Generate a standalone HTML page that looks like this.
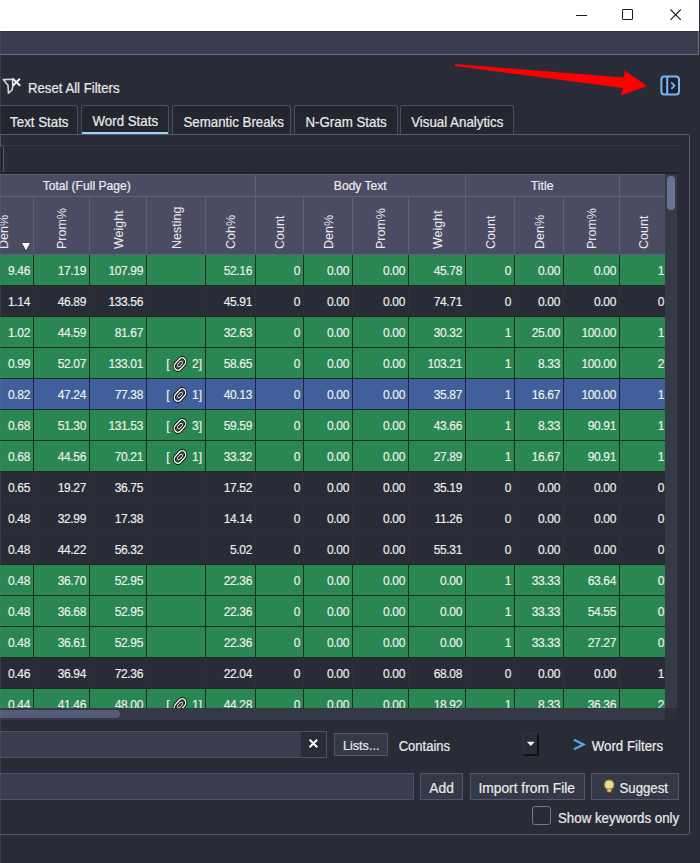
<!DOCTYPE html>
<html><head><meta charset="utf-8">
<style>
*{margin:0;padding:0;box-sizing:border-box}
html,body{width:700px;height:863px;overflow:hidden;background:#292c37;font-family:"Liberation Sans",sans-serif;color:#eaeaea}
.a{position:absolute}
.t{position:absolute;white-space:nowrap;line-height:1;transform:scaleY(1.08);-webkit-text-stroke:0.2px currentColor}
.tab{position:absolute;top:105px;height:29px;border:1px solid #4b4e5e;border-bottom:none;border-radius:3px 3px 0 0;background:#23262f}
.cell{position:absolute;height:30px;font-size:12px;line-height:32px;transform:scaleY(1.1);transform-origin:center 16px;text-align:right;color:#eef2ee;letter-spacing:-0.35px;-webkit-text-stroke:0.15px currentColor}
.hc{position:absolute;font-size:12.5px;color:#e8e8ee;line-height:1;white-space:nowrap;transform:rotate(-90deg);transform-origin:0 0}
.btn{position:absolute;background:#353847;border:1px solid #52566b}
</style></head><body>

<div class="a" style="left:0;top:0;width:699px;height:31px;background:#fff"></div>
<div class="a" style="left:699px;top:0;width:1px;height:31px;background:#2a2d38"></div>
<div class="a" style="left:576px;top:15px;width:11px;height:1px;background:#1a1a1a"></div>
<div class="a" style="left:622px;top:9px;width:11px;height:11px;border:1px solid #1a1a1a;border-radius:1px"></div>
<svg class="a" style="left:669px;top:8px" width="14" height="14" viewBox="0 0 14 14"><path d="M1.5 1.5L11.8 11.8M11.8 1.5L1.5 11.8" stroke="#1a1a1a" stroke-width="1.1"/></svg>
<div class="a" style="left:0;top:31px;width:699px;height:24px;background:#393d4f;border-right:1px solid #6d6f87;border-bottom:1px solid #6d6f87"></div>
<div class="a" style="left:0;top:31px;width:698px;height:1px;background:#30344a"></div>
<svg class="a" style="left:0;top:74px" width="24" height="22" viewBox="0 0 24 22"><path d="M3.2 5.6 L12.6 5.2 L12.8 12.2 L11.9 16.2 L8.4 19.2 L8 11.2 Z" fill="none" stroke="#d6d6d6" stroke-width="1.6" stroke-linejoin="round"/><path d="M12.5 4.6 L20.2 11.8 M20 4.6 L12.8 11.8" stroke="#f4f4f4" stroke-width="2"/></svg>
<div class="t" style="left:28.0px;top:82.0px;font-size:13.2px;">Reset All Filters</div>
<svg class="a" style="left:0;top:0" width="700" height="110"><polygon points="455,64 624,77.5 624.5,70.5 647,86 620.5,95.5 623,88 455,66" fill="#ff0000"/></svg>
<svg class="a" style="left:660px;top:75px" width="21" height="21" viewBox="0 0 21 21"><rect x="1.4" y="1.6" width="17.6" height="17.8" rx="3" fill="#1b2130" stroke="#78b8f0" stroke-width="2"/><rect x="6.2" y="2" width="2" height="17" fill="#78b8f0"/><path d="M11.2 7.3 L14.5 10.6 L11.4 13.9" fill="none" stroke="#78b8f0" stroke-width="1.7"/></svg>
<div class="tab" style="left:-3px;width:81px"></div>
<div class="t" style="left:10.1px;top:116.0px;font-size:13.3px;">Text Stats</div>
<div class="tab" style="left:81px;width:88px"></div>
<div class="t" style="left:92.5px;top:115.0px;font-size:13.3px;">Word Stats</div>
<div class="tab" style="left:172px;width:119px"></div>
<div class="t" style="left:183.4px;top:116.0px;font-size:13.3px;">Semantic Breaks</div>
<div class="tab" style="left:294px;width:104px"></div>
<div class="t" style="left:305.5px;top:116.0px;font-size:13.3px;">N-Gram Stats</div>
<div class="tab" style="left:400px;width:114px"></div>
<div class="t" style="left:411.2px;top:116.0px;font-size:13.3px;">Visual Analytics</div>
<div class="a" style="left:-3px;top:134px;width:693px;height:701px;border:1px solid #565a6c;border-radius:2px"></div>
<div class="a" style="left:0;top:145px;width:679px;height:1px;background:#363945"></div>
<div class="a" style="left:-3px;top:145px;width:7px;height:28px;border:1px solid #5a5d6e;border-radius:0 3px 3px 0;background:#1f222b"></div>
<div class="a" style="left:82px;top:132px;width:86px;height:2px;background:#a6d0f2"></div>
<div class="a" style="left:0;top:134px;width:1px;height:11px;background:#4a4d5e"></div>
<div class="a" style="left:0;top:172px;width:677px;height:2px;background:#1f2129"></div>
<div class="a" style="left:0;top:174px;width:665px;height:81px;background:#4b4c63"></div>
<div class="a" style="left:0;top:174px;width:665px;height:1px;background:#5d6076"></div>
<div class="a" style="left:0;top:196px;width:665px;height:1px;background:#5d6076"></div>
<div class="a" style="left:0;top:254px;width:665px;height:1px;background:#5d6076"></div>
<div class="a" style="left:255px;top:174px;width:1px;height:23px;background:#5d6076"></div>
<div class="a" style="left:465px;top:174px;width:1px;height:23px;background:#5d6076"></div>
<div class="a" style="left:619px;top:174px;width:1px;height:23px;background:#5d6076"></div>
<div class="a" style="left:33px;top:196px;width:1px;height:59px;background:#5d6076"></div>
<div class="a" style="left:89px;top:196px;width:1px;height:59px;background:#5d6076"></div>
<div class="a" style="left:146px;top:196px;width:1px;height:59px;background:#5d6076"></div>
<div class="a" style="left:205px;top:196px;width:1px;height:59px;background:#5d6076"></div>
<div class="a" style="left:255px;top:196px;width:1px;height:59px;background:#5d6076"></div>
<div class="a" style="left:303px;top:196px;width:1px;height:59px;background:#5d6076"></div>
<div class="a" style="left:352px;top:196px;width:1px;height:59px;background:#5d6076"></div>
<div class="a" style="left:408px;top:196px;width:1px;height:59px;background:#5d6076"></div>
<div class="a" style="left:465px;top:196px;width:1px;height:59px;background:#5d6076"></div>
<div class="a" style="left:514px;top:196px;width:1px;height:59px;background:#5d6076"></div>
<div class="a" style="left:563px;top:196px;width:1px;height:59px;background:#5d6076"></div>
<div class="a" style="left:619px;top:196px;width:1px;height:59px;background:#5d6076"></div>
<div class="t" style="left:86.7px;width:400px;margin-left:-200px;text-align:center;top:179.7px;font-size:12.1px;color:#ededf2;">Total (Full Page)</div>
<div class="t" style="left:360.3px;width:400px;margin-left:-200px;text-align:center;top:179.7px;font-size:12.1px;color:#ededf2;">Body Text</div>
<div class="t" style="left:542.2px;width:400px;margin-left:-200px;text-align:center;top:179.7px;font-size:12.3px;color:#ededf2;">Title</div>
<div class="hc" style="left:-2.5px;top:249px">Den%</div>
<div class="hc" style="left:56.0px;top:249px">Prom%</div>
<div class="hc" style="left:112.5px;top:249px">Weight</div>
<div class="hc" style="left:170.5px;top:249px">Nesting</div>
<div class="hc" style="left:225.0px;top:249px">Coh%</div>
<div class="hc" style="left:274.0px;top:249px">Count</div>
<div class="hc" style="left:322.5px;top:249px">Den%</div>
<div class="hc" style="left:375.0px;top:249px">Prom%</div>
<div class="hc" style="left:431.5px;top:249px">Weight</div>
<div class="hc" style="left:484.5px;top:249px">Count</div>
<div class="hc" style="left:533.5px;top:249px">Den%</div>
<div class="hc" style="left:586.0px;top:249px">Prom%</div>
<div class="hc" style="left:638.0px;top:249px">Count</div>
<svg class="a" style="left:20px;top:241px" width="12" height="11" viewBox="0 0 12 11"><path d="M1.2 1.5 L10.8 1.5 L6 10 Z" fill="#fff" stroke="#2a2c38" stroke-width="0.8"/></svg>
<div class="a" style="left:0;top:255px;width:665px;height:453px;overflow:hidden">
<div class="a" style="left:0;top:0px;width:665px;height:31px;background:#2a8751"></div>
<div class="a" style="left:0;top:30px;width:665px;height:1px;background:#1b2a22"></div>
<div class="a" style="left:33px;top:0px;width:1px;height:31px;background:#1b2a22"></div>
<div class="a" style="left:89px;top:0px;width:1px;height:31px;background:#1b2a22"></div>
<div class="a" style="left:146px;top:0px;width:1px;height:31px;background:#1b2a22"></div>
<div class="a" style="left:205px;top:0px;width:1px;height:31px;background:#1b2a22"></div>
<div class="a" style="left:255px;top:0px;width:1px;height:31px;background:#1b2a22"></div>
<div class="a" style="left:303px;top:0px;width:1px;height:31px;background:#1b2a22"></div>
<div class="a" style="left:352px;top:0px;width:1px;height:31px;background:#1b2a22"></div>
<div class="a" style="left:408px;top:0px;width:1px;height:31px;background:#1b2a22"></div>
<div class="a" style="left:465px;top:0px;width:1px;height:31px;background:#1b2a22"></div>
<div class="a" style="left:514px;top:0px;width:1px;height:31px;background:#1b2a22"></div>
<div class="a" style="left:563px;top:0px;width:1px;height:31px;background:#1b2a22"></div>
<div class="a" style="left:619px;top:0px;width:1px;height:31px;background:#1b2a22"></div>
<div class="cell" style="left:-20px;top:0px;width:50px">9.46</div>
<div class="cell" style="left:34px;top:0px;width:52px">17.19</div>
<div class="cell" style="left:90px;top:0px;width:53px">107.99</div>
<div class="cell" style="left:206px;top:0px;width:46px">52.16</div>
<div class="cell" style="left:256px;top:0px;width:44px">0</div>
<div class="cell" style="left:304px;top:0px;width:45px">0.00</div>
<div class="cell" style="left:353px;top:0px;width:52px">0.00</div>
<div class="cell" style="left:409px;top:0px;width:53px">45.78</div>
<div class="cell" style="left:466px;top:0px;width:45px">0</div>
<div class="cell" style="left:515px;top:0px;width:45px">0.00</div>
<div class="cell" style="left:564px;top:0px;width:52px">0.00</div>
<div class="cell" style="left:620px;top:0px;width:44px">1</div>
<div class="a" style="left:0;top:31px;width:665px;height:31px;background:#292c37"></div>
<div class="a" style="left:0;top:61px;width:665px;height:1px;background:#1b2a22"></div>
<div class="a" style="left:33px;top:31px;width:1px;height:31px;background:#2d303b"></div>
<div class="a" style="left:89px;top:31px;width:1px;height:31px;background:#2d303b"></div>
<div class="a" style="left:146px;top:31px;width:1px;height:31px;background:#2d303b"></div>
<div class="a" style="left:205px;top:31px;width:1px;height:31px;background:#2d303b"></div>
<div class="a" style="left:255px;top:31px;width:1px;height:31px;background:#2d303b"></div>
<div class="a" style="left:303px;top:31px;width:1px;height:31px;background:#2d303b"></div>
<div class="a" style="left:352px;top:31px;width:1px;height:31px;background:#2d303b"></div>
<div class="a" style="left:408px;top:31px;width:1px;height:31px;background:#2d303b"></div>
<div class="a" style="left:465px;top:31px;width:1px;height:31px;background:#2d303b"></div>
<div class="a" style="left:514px;top:31px;width:1px;height:31px;background:#2d303b"></div>
<div class="a" style="left:563px;top:31px;width:1px;height:31px;background:#2d303b"></div>
<div class="a" style="left:619px;top:31px;width:1px;height:31px;background:#2d303b"></div>
<div class="cell" style="left:-20px;top:31px;width:50px">1.14</div>
<div class="cell" style="left:34px;top:31px;width:52px">46.89</div>
<div class="cell" style="left:90px;top:31px;width:53px">133.56</div>
<div class="cell" style="left:206px;top:31px;width:46px">45.91</div>
<div class="cell" style="left:256px;top:31px;width:44px">0</div>
<div class="cell" style="left:304px;top:31px;width:45px">0.00</div>
<div class="cell" style="left:353px;top:31px;width:52px">0.00</div>
<div class="cell" style="left:409px;top:31px;width:53px">74.71</div>
<div class="cell" style="left:466px;top:31px;width:45px">0</div>
<div class="cell" style="left:515px;top:31px;width:45px">0.00</div>
<div class="cell" style="left:564px;top:31px;width:52px">0.00</div>
<div class="cell" style="left:620px;top:31px;width:44px">0</div>
<div class="a" style="left:0;top:62px;width:665px;height:31px;background:#2a8751"></div>
<div class="a" style="left:0;top:92px;width:665px;height:1px;background:#1b2a22"></div>
<div class="a" style="left:33px;top:62px;width:1px;height:31px;background:#1b2a22"></div>
<div class="a" style="left:89px;top:62px;width:1px;height:31px;background:#1b2a22"></div>
<div class="a" style="left:146px;top:62px;width:1px;height:31px;background:#1b2a22"></div>
<div class="a" style="left:205px;top:62px;width:1px;height:31px;background:#1b2a22"></div>
<div class="a" style="left:255px;top:62px;width:1px;height:31px;background:#1b2a22"></div>
<div class="a" style="left:303px;top:62px;width:1px;height:31px;background:#1b2a22"></div>
<div class="a" style="left:352px;top:62px;width:1px;height:31px;background:#1b2a22"></div>
<div class="a" style="left:408px;top:62px;width:1px;height:31px;background:#1b2a22"></div>
<div class="a" style="left:465px;top:62px;width:1px;height:31px;background:#1b2a22"></div>
<div class="a" style="left:514px;top:62px;width:1px;height:31px;background:#1b2a22"></div>
<div class="a" style="left:563px;top:62px;width:1px;height:31px;background:#1b2a22"></div>
<div class="a" style="left:619px;top:62px;width:1px;height:31px;background:#1b2a22"></div>
<div class="cell" style="left:-20px;top:62px;width:50px">1.02</div>
<div class="cell" style="left:34px;top:62px;width:52px">44.59</div>
<div class="cell" style="left:90px;top:62px;width:53px">81.67</div>
<div class="cell" style="left:206px;top:62px;width:46px">32.63</div>
<div class="cell" style="left:256px;top:62px;width:44px">0</div>
<div class="cell" style="left:304px;top:62px;width:45px">0.00</div>
<div class="cell" style="left:353px;top:62px;width:52px">0.00</div>
<div class="cell" style="left:409px;top:62px;width:53px">30.32</div>
<div class="cell" style="left:466px;top:62px;width:45px">1</div>
<div class="cell" style="left:515px;top:62px;width:45px">25.00</div>
<div class="cell" style="left:564px;top:62px;width:52px">100.00</div>
<div class="cell" style="left:620px;top:62px;width:44px">1</div>
<div class="a" style="left:0;top:93px;width:665px;height:31px;background:#2a8751"></div>
<div class="a" style="left:0;top:123px;width:665px;height:1px;background:#1b2a22"></div>
<div class="a" style="left:33px;top:93px;width:1px;height:31px;background:#1b2a22"></div>
<div class="a" style="left:89px;top:93px;width:1px;height:31px;background:#1b2a22"></div>
<div class="a" style="left:146px;top:93px;width:1px;height:31px;background:#1b2a22"></div>
<div class="a" style="left:205px;top:93px;width:1px;height:31px;background:#1b2a22"></div>
<div class="a" style="left:255px;top:93px;width:1px;height:31px;background:#1b2a22"></div>
<div class="a" style="left:303px;top:93px;width:1px;height:31px;background:#1b2a22"></div>
<div class="a" style="left:352px;top:93px;width:1px;height:31px;background:#1b2a22"></div>
<div class="a" style="left:408px;top:93px;width:1px;height:31px;background:#1b2a22"></div>
<div class="a" style="left:465px;top:93px;width:1px;height:31px;background:#1b2a22"></div>
<div class="a" style="left:514px;top:93px;width:1px;height:31px;background:#1b2a22"></div>
<div class="a" style="left:563px;top:93px;width:1px;height:31px;background:#1b2a22"></div>
<div class="a" style="left:619px;top:93px;width:1px;height:31px;background:#1b2a22"></div>
<div class="cell" style="left:-20px;top:93px;width:50px">0.99</div>
<div class="cell" style="left:34px;top:93px;width:52px">52.07</div>
<div class="cell" style="left:90px;top:93px;width:53px">133.01</div>
<div class="cell" style="left:147px;top:93px;width:55px;letter-spacing:0">[<svg width="16" height="16" viewBox="0 0 16 16" style="vertical-align:-4px;margin:0 1px 0 2px"><g transform="rotate(-45 8 8)"><rect x="1.4" y="4.4" width="13.2" height="7.2" rx="3.6" fill="none" stroke="#0d0d0d" stroke-width="3"/><rect x="1.4" y="4.4" width="13.2" height="7.2" rx="3.6" fill="none" stroke="#f0f0f0" stroke-width="1.4"/><rect x="5" y="6.6" width="6" height="2.8" rx="1.4" fill="none" stroke="#0d0d0d" stroke-width="2.2"/><rect x="5" y="6.6" width="6" height="2.8" rx="1.4" fill="none" stroke="#e8e8e8" stroke-width="0.9"/></g></svg> 2]</div>
<div class="cell" style="left:206px;top:93px;width:46px">58.65</div>
<div class="cell" style="left:256px;top:93px;width:44px">0</div>
<div class="cell" style="left:304px;top:93px;width:45px">0.00</div>
<div class="cell" style="left:353px;top:93px;width:52px">0.00</div>
<div class="cell" style="left:409px;top:93px;width:53px">103.21</div>
<div class="cell" style="left:466px;top:93px;width:45px">1</div>
<div class="cell" style="left:515px;top:93px;width:45px">8.33</div>
<div class="cell" style="left:564px;top:93px;width:52px">100.00</div>
<div class="cell" style="left:620px;top:93px;width:44px">2</div>
<div class="a" style="left:0;top:124px;width:665px;height:31px;background:#41609b"></div>
<div class="a" style="left:0;top:154px;width:665px;height:1px;background:#1c2438"></div>
<div class="a" style="left:33px;top:124px;width:1px;height:31px;background:#1c2438"></div>
<div class="a" style="left:89px;top:124px;width:1px;height:31px;background:#1c2438"></div>
<div class="a" style="left:146px;top:124px;width:1px;height:31px;background:#1c2438"></div>
<div class="a" style="left:205px;top:124px;width:1px;height:31px;background:#1c2438"></div>
<div class="a" style="left:255px;top:124px;width:1px;height:31px;background:#1c2438"></div>
<div class="a" style="left:303px;top:124px;width:1px;height:31px;background:#1c2438"></div>
<div class="a" style="left:352px;top:124px;width:1px;height:31px;background:#1c2438"></div>
<div class="a" style="left:408px;top:124px;width:1px;height:31px;background:#1c2438"></div>
<div class="a" style="left:465px;top:124px;width:1px;height:31px;background:#1c2438"></div>
<div class="a" style="left:514px;top:124px;width:1px;height:31px;background:#1c2438"></div>
<div class="a" style="left:563px;top:124px;width:1px;height:31px;background:#1c2438"></div>
<div class="a" style="left:619px;top:124px;width:1px;height:31px;background:#1c2438"></div>
<div class="cell" style="left:-20px;top:124px;width:50px">0.82</div>
<div class="cell" style="left:34px;top:124px;width:52px">47.24</div>
<div class="cell" style="left:90px;top:124px;width:53px">77.38</div>
<div class="cell" style="left:147px;top:124px;width:55px;letter-spacing:0">[<svg width="16" height="16" viewBox="0 0 16 16" style="vertical-align:-4px;margin:0 1px 0 2px"><g transform="rotate(-45 8 8)"><rect x="1.4" y="4.4" width="13.2" height="7.2" rx="3.6" fill="none" stroke="#0d0d0d" stroke-width="3"/><rect x="1.4" y="4.4" width="13.2" height="7.2" rx="3.6" fill="none" stroke="#f0f0f0" stroke-width="1.4"/><rect x="5" y="6.6" width="6" height="2.8" rx="1.4" fill="none" stroke="#0d0d0d" stroke-width="2.2"/><rect x="5" y="6.6" width="6" height="2.8" rx="1.4" fill="none" stroke="#e8e8e8" stroke-width="0.9"/></g></svg> 1]</div>
<div class="cell" style="left:206px;top:124px;width:46px">40.13</div>
<div class="cell" style="left:256px;top:124px;width:44px">0</div>
<div class="cell" style="left:304px;top:124px;width:45px">0.00</div>
<div class="cell" style="left:353px;top:124px;width:52px">0.00</div>
<div class="cell" style="left:409px;top:124px;width:53px">35.87</div>
<div class="cell" style="left:466px;top:124px;width:45px">1</div>
<div class="cell" style="left:515px;top:124px;width:45px">16.67</div>
<div class="cell" style="left:564px;top:124px;width:52px">100.00</div>
<div class="cell" style="left:620px;top:124px;width:44px">1</div>
<div class="a" style="left:0;top:155px;width:665px;height:31px;background:#2a8751"></div>
<div class="a" style="left:0;top:185px;width:665px;height:1px;background:#1b2a22"></div>
<div class="a" style="left:33px;top:155px;width:1px;height:31px;background:#1b2a22"></div>
<div class="a" style="left:89px;top:155px;width:1px;height:31px;background:#1b2a22"></div>
<div class="a" style="left:146px;top:155px;width:1px;height:31px;background:#1b2a22"></div>
<div class="a" style="left:205px;top:155px;width:1px;height:31px;background:#1b2a22"></div>
<div class="a" style="left:255px;top:155px;width:1px;height:31px;background:#1b2a22"></div>
<div class="a" style="left:303px;top:155px;width:1px;height:31px;background:#1b2a22"></div>
<div class="a" style="left:352px;top:155px;width:1px;height:31px;background:#1b2a22"></div>
<div class="a" style="left:408px;top:155px;width:1px;height:31px;background:#1b2a22"></div>
<div class="a" style="left:465px;top:155px;width:1px;height:31px;background:#1b2a22"></div>
<div class="a" style="left:514px;top:155px;width:1px;height:31px;background:#1b2a22"></div>
<div class="a" style="left:563px;top:155px;width:1px;height:31px;background:#1b2a22"></div>
<div class="a" style="left:619px;top:155px;width:1px;height:31px;background:#1b2a22"></div>
<div class="cell" style="left:-20px;top:155px;width:50px">0.68</div>
<div class="cell" style="left:34px;top:155px;width:52px">51.30</div>
<div class="cell" style="left:90px;top:155px;width:53px">131.53</div>
<div class="cell" style="left:147px;top:155px;width:55px;letter-spacing:0">[<svg width="16" height="16" viewBox="0 0 16 16" style="vertical-align:-4px;margin:0 1px 0 2px"><g transform="rotate(-45 8 8)"><rect x="1.4" y="4.4" width="13.2" height="7.2" rx="3.6" fill="none" stroke="#0d0d0d" stroke-width="3"/><rect x="1.4" y="4.4" width="13.2" height="7.2" rx="3.6" fill="none" stroke="#f0f0f0" stroke-width="1.4"/><rect x="5" y="6.6" width="6" height="2.8" rx="1.4" fill="none" stroke="#0d0d0d" stroke-width="2.2"/><rect x="5" y="6.6" width="6" height="2.8" rx="1.4" fill="none" stroke="#e8e8e8" stroke-width="0.9"/></g></svg> 3]</div>
<div class="cell" style="left:206px;top:155px;width:46px">59.59</div>
<div class="cell" style="left:256px;top:155px;width:44px">0</div>
<div class="cell" style="left:304px;top:155px;width:45px">0.00</div>
<div class="cell" style="left:353px;top:155px;width:52px">0.00</div>
<div class="cell" style="left:409px;top:155px;width:53px">43.66</div>
<div class="cell" style="left:466px;top:155px;width:45px">1</div>
<div class="cell" style="left:515px;top:155px;width:45px">8.33</div>
<div class="cell" style="left:564px;top:155px;width:52px">90.91</div>
<div class="cell" style="left:620px;top:155px;width:44px">1</div>
<div class="a" style="left:0;top:186px;width:665px;height:31px;background:#2a8751"></div>
<div class="a" style="left:0;top:216px;width:665px;height:1px;background:#1b2a22"></div>
<div class="a" style="left:33px;top:186px;width:1px;height:31px;background:#1b2a22"></div>
<div class="a" style="left:89px;top:186px;width:1px;height:31px;background:#1b2a22"></div>
<div class="a" style="left:146px;top:186px;width:1px;height:31px;background:#1b2a22"></div>
<div class="a" style="left:205px;top:186px;width:1px;height:31px;background:#1b2a22"></div>
<div class="a" style="left:255px;top:186px;width:1px;height:31px;background:#1b2a22"></div>
<div class="a" style="left:303px;top:186px;width:1px;height:31px;background:#1b2a22"></div>
<div class="a" style="left:352px;top:186px;width:1px;height:31px;background:#1b2a22"></div>
<div class="a" style="left:408px;top:186px;width:1px;height:31px;background:#1b2a22"></div>
<div class="a" style="left:465px;top:186px;width:1px;height:31px;background:#1b2a22"></div>
<div class="a" style="left:514px;top:186px;width:1px;height:31px;background:#1b2a22"></div>
<div class="a" style="left:563px;top:186px;width:1px;height:31px;background:#1b2a22"></div>
<div class="a" style="left:619px;top:186px;width:1px;height:31px;background:#1b2a22"></div>
<div class="cell" style="left:-20px;top:186px;width:50px">0.68</div>
<div class="cell" style="left:34px;top:186px;width:52px">44.56</div>
<div class="cell" style="left:90px;top:186px;width:53px">70.21</div>
<div class="cell" style="left:147px;top:186px;width:55px;letter-spacing:0">[<svg width="16" height="16" viewBox="0 0 16 16" style="vertical-align:-4px;margin:0 1px 0 2px"><g transform="rotate(-45 8 8)"><rect x="1.4" y="4.4" width="13.2" height="7.2" rx="3.6" fill="none" stroke="#0d0d0d" stroke-width="3"/><rect x="1.4" y="4.4" width="13.2" height="7.2" rx="3.6" fill="none" stroke="#f0f0f0" stroke-width="1.4"/><rect x="5" y="6.6" width="6" height="2.8" rx="1.4" fill="none" stroke="#0d0d0d" stroke-width="2.2"/><rect x="5" y="6.6" width="6" height="2.8" rx="1.4" fill="none" stroke="#e8e8e8" stroke-width="0.9"/></g></svg> 1]</div>
<div class="cell" style="left:206px;top:186px;width:46px">33.32</div>
<div class="cell" style="left:256px;top:186px;width:44px">0</div>
<div class="cell" style="left:304px;top:186px;width:45px">0.00</div>
<div class="cell" style="left:353px;top:186px;width:52px">0.00</div>
<div class="cell" style="left:409px;top:186px;width:53px">27.89</div>
<div class="cell" style="left:466px;top:186px;width:45px">1</div>
<div class="cell" style="left:515px;top:186px;width:45px">16.67</div>
<div class="cell" style="left:564px;top:186px;width:52px">90.91</div>
<div class="cell" style="left:620px;top:186px;width:44px">1</div>
<div class="a" style="left:0;top:217px;width:665px;height:31px;background:#292c37"></div>
<div class="a" style="left:0;top:247px;width:665px;height:1px;background:#2d303b"></div>
<div class="a" style="left:33px;top:217px;width:1px;height:31px;background:#2d303b"></div>
<div class="a" style="left:89px;top:217px;width:1px;height:31px;background:#2d303b"></div>
<div class="a" style="left:146px;top:217px;width:1px;height:31px;background:#2d303b"></div>
<div class="a" style="left:205px;top:217px;width:1px;height:31px;background:#2d303b"></div>
<div class="a" style="left:255px;top:217px;width:1px;height:31px;background:#2d303b"></div>
<div class="a" style="left:303px;top:217px;width:1px;height:31px;background:#2d303b"></div>
<div class="a" style="left:352px;top:217px;width:1px;height:31px;background:#2d303b"></div>
<div class="a" style="left:408px;top:217px;width:1px;height:31px;background:#2d303b"></div>
<div class="a" style="left:465px;top:217px;width:1px;height:31px;background:#2d303b"></div>
<div class="a" style="left:514px;top:217px;width:1px;height:31px;background:#2d303b"></div>
<div class="a" style="left:563px;top:217px;width:1px;height:31px;background:#2d303b"></div>
<div class="a" style="left:619px;top:217px;width:1px;height:31px;background:#2d303b"></div>
<div class="cell" style="left:-20px;top:217px;width:50px">0.65</div>
<div class="cell" style="left:34px;top:217px;width:52px">19.27</div>
<div class="cell" style="left:90px;top:217px;width:53px">36.75</div>
<div class="cell" style="left:206px;top:217px;width:46px">17.52</div>
<div class="cell" style="left:256px;top:217px;width:44px">0</div>
<div class="cell" style="left:304px;top:217px;width:45px">0.00</div>
<div class="cell" style="left:353px;top:217px;width:52px">0.00</div>
<div class="cell" style="left:409px;top:217px;width:53px">35.19</div>
<div class="cell" style="left:466px;top:217px;width:45px">0</div>
<div class="cell" style="left:515px;top:217px;width:45px">0.00</div>
<div class="cell" style="left:564px;top:217px;width:52px">0.00</div>
<div class="cell" style="left:620px;top:217px;width:44px">0</div>
<div class="a" style="left:0;top:248px;width:665px;height:31px;background:#292c37"></div>
<div class="a" style="left:0;top:278px;width:665px;height:1px;background:#2d303b"></div>
<div class="a" style="left:33px;top:248px;width:1px;height:31px;background:#2d303b"></div>
<div class="a" style="left:89px;top:248px;width:1px;height:31px;background:#2d303b"></div>
<div class="a" style="left:146px;top:248px;width:1px;height:31px;background:#2d303b"></div>
<div class="a" style="left:205px;top:248px;width:1px;height:31px;background:#2d303b"></div>
<div class="a" style="left:255px;top:248px;width:1px;height:31px;background:#2d303b"></div>
<div class="a" style="left:303px;top:248px;width:1px;height:31px;background:#2d303b"></div>
<div class="a" style="left:352px;top:248px;width:1px;height:31px;background:#2d303b"></div>
<div class="a" style="left:408px;top:248px;width:1px;height:31px;background:#2d303b"></div>
<div class="a" style="left:465px;top:248px;width:1px;height:31px;background:#2d303b"></div>
<div class="a" style="left:514px;top:248px;width:1px;height:31px;background:#2d303b"></div>
<div class="a" style="left:563px;top:248px;width:1px;height:31px;background:#2d303b"></div>
<div class="a" style="left:619px;top:248px;width:1px;height:31px;background:#2d303b"></div>
<div class="cell" style="left:-20px;top:248px;width:50px">0.48</div>
<div class="cell" style="left:34px;top:248px;width:52px">32.99</div>
<div class="cell" style="left:90px;top:248px;width:53px">17.38</div>
<div class="cell" style="left:206px;top:248px;width:46px">14.14</div>
<div class="cell" style="left:256px;top:248px;width:44px">0</div>
<div class="cell" style="left:304px;top:248px;width:45px">0.00</div>
<div class="cell" style="left:353px;top:248px;width:52px">0.00</div>
<div class="cell" style="left:409px;top:248px;width:53px">11.26</div>
<div class="cell" style="left:466px;top:248px;width:45px">0</div>
<div class="cell" style="left:515px;top:248px;width:45px">0.00</div>
<div class="cell" style="left:564px;top:248px;width:52px">0.00</div>
<div class="cell" style="left:620px;top:248px;width:44px">0</div>
<div class="a" style="left:0;top:279px;width:665px;height:31px;background:#292c37"></div>
<div class="a" style="left:0;top:309px;width:665px;height:1px;background:#1b2a22"></div>
<div class="a" style="left:33px;top:279px;width:1px;height:31px;background:#2d303b"></div>
<div class="a" style="left:89px;top:279px;width:1px;height:31px;background:#2d303b"></div>
<div class="a" style="left:146px;top:279px;width:1px;height:31px;background:#2d303b"></div>
<div class="a" style="left:205px;top:279px;width:1px;height:31px;background:#2d303b"></div>
<div class="a" style="left:255px;top:279px;width:1px;height:31px;background:#2d303b"></div>
<div class="a" style="left:303px;top:279px;width:1px;height:31px;background:#2d303b"></div>
<div class="a" style="left:352px;top:279px;width:1px;height:31px;background:#2d303b"></div>
<div class="a" style="left:408px;top:279px;width:1px;height:31px;background:#2d303b"></div>
<div class="a" style="left:465px;top:279px;width:1px;height:31px;background:#2d303b"></div>
<div class="a" style="left:514px;top:279px;width:1px;height:31px;background:#2d303b"></div>
<div class="a" style="left:563px;top:279px;width:1px;height:31px;background:#2d303b"></div>
<div class="a" style="left:619px;top:279px;width:1px;height:31px;background:#2d303b"></div>
<div class="cell" style="left:-20px;top:279px;width:50px">0.48</div>
<div class="cell" style="left:34px;top:279px;width:52px">44.22</div>
<div class="cell" style="left:90px;top:279px;width:53px">56.32</div>
<div class="cell" style="left:206px;top:279px;width:46px">5.02</div>
<div class="cell" style="left:256px;top:279px;width:44px">0</div>
<div class="cell" style="left:304px;top:279px;width:45px">0.00</div>
<div class="cell" style="left:353px;top:279px;width:52px">0.00</div>
<div class="cell" style="left:409px;top:279px;width:53px">55.31</div>
<div class="cell" style="left:466px;top:279px;width:45px">0</div>
<div class="cell" style="left:515px;top:279px;width:45px">0.00</div>
<div class="cell" style="left:564px;top:279px;width:52px">0.00</div>
<div class="cell" style="left:620px;top:279px;width:44px">0</div>
<div class="a" style="left:0;top:310px;width:665px;height:31px;background:#2a8751"></div>
<div class="a" style="left:0;top:340px;width:665px;height:1px;background:#1b2a22"></div>
<div class="a" style="left:33px;top:310px;width:1px;height:31px;background:#1b2a22"></div>
<div class="a" style="left:89px;top:310px;width:1px;height:31px;background:#1b2a22"></div>
<div class="a" style="left:146px;top:310px;width:1px;height:31px;background:#1b2a22"></div>
<div class="a" style="left:205px;top:310px;width:1px;height:31px;background:#1b2a22"></div>
<div class="a" style="left:255px;top:310px;width:1px;height:31px;background:#1b2a22"></div>
<div class="a" style="left:303px;top:310px;width:1px;height:31px;background:#1b2a22"></div>
<div class="a" style="left:352px;top:310px;width:1px;height:31px;background:#1b2a22"></div>
<div class="a" style="left:408px;top:310px;width:1px;height:31px;background:#1b2a22"></div>
<div class="a" style="left:465px;top:310px;width:1px;height:31px;background:#1b2a22"></div>
<div class="a" style="left:514px;top:310px;width:1px;height:31px;background:#1b2a22"></div>
<div class="a" style="left:563px;top:310px;width:1px;height:31px;background:#1b2a22"></div>
<div class="a" style="left:619px;top:310px;width:1px;height:31px;background:#1b2a22"></div>
<div class="cell" style="left:-20px;top:310px;width:50px">0.48</div>
<div class="cell" style="left:34px;top:310px;width:52px">36.70</div>
<div class="cell" style="left:90px;top:310px;width:53px">52.95</div>
<div class="cell" style="left:206px;top:310px;width:46px">22.36</div>
<div class="cell" style="left:256px;top:310px;width:44px">0</div>
<div class="cell" style="left:304px;top:310px;width:45px">0.00</div>
<div class="cell" style="left:353px;top:310px;width:52px">0.00</div>
<div class="cell" style="left:409px;top:310px;width:53px">0.00</div>
<div class="cell" style="left:466px;top:310px;width:45px">1</div>
<div class="cell" style="left:515px;top:310px;width:45px">33.33</div>
<div class="cell" style="left:564px;top:310px;width:52px">63.64</div>
<div class="cell" style="left:620px;top:310px;width:44px">0</div>
<div class="a" style="left:0;top:341px;width:665px;height:31px;background:#2a8751"></div>
<div class="a" style="left:0;top:371px;width:665px;height:1px;background:#1b2a22"></div>
<div class="a" style="left:33px;top:341px;width:1px;height:31px;background:#1b2a22"></div>
<div class="a" style="left:89px;top:341px;width:1px;height:31px;background:#1b2a22"></div>
<div class="a" style="left:146px;top:341px;width:1px;height:31px;background:#1b2a22"></div>
<div class="a" style="left:205px;top:341px;width:1px;height:31px;background:#1b2a22"></div>
<div class="a" style="left:255px;top:341px;width:1px;height:31px;background:#1b2a22"></div>
<div class="a" style="left:303px;top:341px;width:1px;height:31px;background:#1b2a22"></div>
<div class="a" style="left:352px;top:341px;width:1px;height:31px;background:#1b2a22"></div>
<div class="a" style="left:408px;top:341px;width:1px;height:31px;background:#1b2a22"></div>
<div class="a" style="left:465px;top:341px;width:1px;height:31px;background:#1b2a22"></div>
<div class="a" style="left:514px;top:341px;width:1px;height:31px;background:#1b2a22"></div>
<div class="a" style="left:563px;top:341px;width:1px;height:31px;background:#1b2a22"></div>
<div class="a" style="left:619px;top:341px;width:1px;height:31px;background:#1b2a22"></div>
<div class="cell" style="left:-20px;top:341px;width:50px">0.48</div>
<div class="cell" style="left:34px;top:341px;width:52px">36.68</div>
<div class="cell" style="left:90px;top:341px;width:53px">52.95</div>
<div class="cell" style="left:206px;top:341px;width:46px">22.36</div>
<div class="cell" style="left:256px;top:341px;width:44px">0</div>
<div class="cell" style="left:304px;top:341px;width:45px">0.00</div>
<div class="cell" style="left:353px;top:341px;width:52px">0.00</div>
<div class="cell" style="left:409px;top:341px;width:53px">0.00</div>
<div class="cell" style="left:466px;top:341px;width:45px">1</div>
<div class="cell" style="left:515px;top:341px;width:45px">33.33</div>
<div class="cell" style="left:564px;top:341px;width:52px">54.55</div>
<div class="cell" style="left:620px;top:341px;width:44px">0</div>
<div class="a" style="left:0;top:372px;width:665px;height:31px;background:#2a8751"></div>
<div class="a" style="left:0;top:402px;width:665px;height:1px;background:#1b2a22"></div>
<div class="a" style="left:33px;top:372px;width:1px;height:31px;background:#1b2a22"></div>
<div class="a" style="left:89px;top:372px;width:1px;height:31px;background:#1b2a22"></div>
<div class="a" style="left:146px;top:372px;width:1px;height:31px;background:#1b2a22"></div>
<div class="a" style="left:205px;top:372px;width:1px;height:31px;background:#1b2a22"></div>
<div class="a" style="left:255px;top:372px;width:1px;height:31px;background:#1b2a22"></div>
<div class="a" style="left:303px;top:372px;width:1px;height:31px;background:#1b2a22"></div>
<div class="a" style="left:352px;top:372px;width:1px;height:31px;background:#1b2a22"></div>
<div class="a" style="left:408px;top:372px;width:1px;height:31px;background:#1b2a22"></div>
<div class="a" style="left:465px;top:372px;width:1px;height:31px;background:#1b2a22"></div>
<div class="a" style="left:514px;top:372px;width:1px;height:31px;background:#1b2a22"></div>
<div class="a" style="left:563px;top:372px;width:1px;height:31px;background:#1b2a22"></div>
<div class="a" style="left:619px;top:372px;width:1px;height:31px;background:#1b2a22"></div>
<div class="cell" style="left:-20px;top:372px;width:50px">0.48</div>
<div class="cell" style="left:34px;top:372px;width:52px">36.61</div>
<div class="cell" style="left:90px;top:372px;width:53px">52.95</div>
<div class="cell" style="left:206px;top:372px;width:46px">22.36</div>
<div class="cell" style="left:256px;top:372px;width:44px">0</div>
<div class="cell" style="left:304px;top:372px;width:45px">0.00</div>
<div class="cell" style="left:353px;top:372px;width:52px">0.00</div>
<div class="cell" style="left:409px;top:372px;width:53px">0.00</div>
<div class="cell" style="left:466px;top:372px;width:45px">1</div>
<div class="cell" style="left:515px;top:372px;width:45px">33.33</div>
<div class="cell" style="left:564px;top:372px;width:52px">27.27</div>
<div class="cell" style="left:620px;top:372px;width:44px">0</div>
<div class="a" style="left:0;top:403px;width:665px;height:31px;background:#292c37"></div>
<div class="a" style="left:0;top:433px;width:665px;height:1px;background:#1b2a22"></div>
<div class="a" style="left:33px;top:403px;width:1px;height:31px;background:#2d303b"></div>
<div class="a" style="left:89px;top:403px;width:1px;height:31px;background:#2d303b"></div>
<div class="a" style="left:146px;top:403px;width:1px;height:31px;background:#2d303b"></div>
<div class="a" style="left:205px;top:403px;width:1px;height:31px;background:#2d303b"></div>
<div class="a" style="left:255px;top:403px;width:1px;height:31px;background:#2d303b"></div>
<div class="a" style="left:303px;top:403px;width:1px;height:31px;background:#2d303b"></div>
<div class="a" style="left:352px;top:403px;width:1px;height:31px;background:#2d303b"></div>
<div class="a" style="left:408px;top:403px;width:1px;height:31px;background:#2d303b"></div>
<div class="a" style="left:465px;top:403px;width:1px;height:31px;background:#2d303b"></div>
<div class="a" style="left:514px;top:403px;width:1px;height:31px;background:#2d303b"></div>
<div class="a" style="left:563px;top:403px;width:1px;height:31px;background:#2d303b"></div>
<div class="a" style="left:619px;top:403px;width:1px;height:31px;background:#2d303b"></div>
<div class="cell" style="left:-20px;top:403px;width:50px">0.46</div>
<div class="cell" style="left:34px;top:403px;width:52px">36.94</div>
<div class="cell" style="left:90px;top:403px;width:53px">72.36</div>
<div class="cell" style="left:206px;top:403px;width:46px">22.04</div>
<div class="cell" style="left:256px;top:403px;width:44px">0</div>
<div class="cell" style="left:304px;top:403px;width:45px">0.00</div>
<div class="cell" style="left:353px;top:403px;width:52px">0.00</div>
<div class="cell" style="left:409px;top:403px;width:53px">68.08</div>
<div class="cell" style="left:466px;top:403px;width:45px">0</div>
<div class="cell" style="left:515px;top:403px;width:45px">0.00</div>
<div class="cell" style="left:564px;top:403px;width:52px">0.00</div>
<div class="cell" style="left:620px;top:403px;width:44px">1</div>
<div class="a" style="left:0;top:434px;width:665px;height:31px;background:#2a8751"></div>
<div class="a" style="left:0;top:464px;width:665px;height:1px;background:#1b2a22"></div>
<div class="a" style="left:33px;top:434px;width:1px;height:31px;background:#1b2a22"></div>
<div class="a" style="left:89px;top:434px;width:1px;height:31px;background:#1b2a22"></div>
<div class="a" style="left:146px;top:434px;width:1px;height:31px;background:#1b2a22"></div>
<div class="a" style="left:205px;top:434px;width:1px;height:31px;background:#1b2a22"></div>
<div class="a" style="left:255px;top:434px;width:1px;height:31px;background:#1b2a22"></div>
<div class="a" style="left:303px;top:434px;width:1px;height:31px;background:#1b2a22"></div>
<div class="a" style="left:352px;top:434px;width:1px;height:31px;background:#1b2a22"></div>
<div class="a" style="left:408px;top:434px;width:1px;height:31px;background:#1b2a22"></div>
<div class="a" style="left:465px;top:434px;width:1px;height:31px;background:#1b2a22"></div>
<div class="a" style="left:514px;top:434px;width:1px;height:31px;background:#1b2a22"></div>
<div class="a" style="left:563px;top:434px;width:1px;height:31px;background:#1b2a22"></div>
<div class="a" style="left:619px;top:434px;width:1px;height:31px;background:#1b2a22"></div>
<div class="cell" style="left:-20px;top:434px;width:50px">0.44</div>
<div class="cell" style="left:34px;top:434px;width:52px">41.46</div>
<div class="cell" style="left:90px;top:434px;width:53px">48.00</div>
<div class="cell" style="left:147px;top:434px;width:55px;letter-spacing:0">[<svg width="16" height="16" viewBox="0 0 16 16" style="vertical-align:-4px;margin:0 1px 0 2px"><g transform="rotate(-45 8 8)"><rect x="1.4" y="4.4" width="13.2" height="7.2" rx="3.6" fill="none" stroke="#0d0d0d" stroke-width="3"/><rect x="1.4" y="4.4" width="13.2" height="7.2" rx="3.6" fill="none" stroke="#f0f0f0" stroke-width="1.4"/><rect x="5" y="6.6" width="6" height="2.8" rx="1.4" fill="none" stroke="#0d0d0d" stroke-width="2.2"/><rect x="5" y="6.6" width="6" height="2.8" rx="1.4" fill="none" stroke="#e8e8e8" stroke-width="0.9"/></g></svg> 1]</div>
<div class="cell" style="left:206px;top:434px;width:46px">44.28</div>
<div class="cell" style="left:256px;top:434px;width:44px">0</div>
<div class="cell" style="left:304px;top:434px;width:45px">0.00</div>
<div class="cell" style="left:353px;top:434px;width:52px">0.00</div>
<div class="cell" style="left:409px;top:434px;width:53px">18.92</div>
<div class="cell" style="left:466px;top:434px;width:45px">1</div>
<div class="cell" style="left:515px;top:434px;width:45px">8.33</div>
<div class="cell" style="left:564px;top:434px;width:52px">36.36</div>
<div class="cell" style="left:620px;top:434px;width:44px">2</div>
</div>
<div class="a" style="left:665px;top:174px;width:12px;height:534px;background:#363946"></div>
<div class="a" style="left:667px;top:176px;width:8px;height:34px;background:#6a7391;border-radius:4px"></div>
<div class="a" style="left:0;top:708px;width:665px;height:12px;background:#353846"></div>
<div class="a" style="left:-4px;top:710px;width:124px;height:8px;background:#555c79;border-radius:4px"></div>
<div class="a" style="left:665px;top:708px;width:12px;height:12px;background:#2c2f3a"></div>
<div class="a" style="left:-2px;top:731px;width:329px;height:27px;background:#3a3d4e;border:1px solid #4e5163"></div>
<div class="a" style="left:301px;top:732px;width:25px;height:25px;background:#292c37"></div>
<svg class="a" style="left:308px;top:738px" width="11" height="11" viewBox="0 0 11 11"><path d="M1.6 1.6L9.2 9.2M9.2 1.6L1.6 9.2" stroke="#fff" stroke-width="2"/></svg>
<div class="btn" style="left:334px;top:733px;width:54px;height:23px"></div>
<div class="t" style="left:343.0px;top:740.1px;font-size:12.6px;">Lists...</div>
<div class="t" style="left:398.7px;top:740.0px;font-size:13.0px;">Contains</div>
<div class="a" style="left:523px;top:733px;width:16px;height:23px;background:#2a2d38;border-left:1px solid #32353f;border-top:1px solid #32353f;border-right:2px solid #111216;border-bottom:2px solid #111216"></div>
<svg class="a" style="left:526px;top:741px" width="10" height="6"><path d="M0.8 0.8 L8.8 0.8 L4.8 5 Z" fill="#f0f0f4"/></svg>
<svg class="a" style="left:571px;top:737px" width="16" height="15" viewBox="0 0 16 15"><path d="M3 2.8 L12.5 7.5 L3 12.2" fill="none" stroke="#5aa6ec" stroke-width="2.2"/></svg>
<div class="t" style="left:591.7px;top:740.0px;font-size:13.3px;">Word Filters</div>
<div class="a" style="left:-2px;top:773px;width:416px;height:27px;background:#3a3d4e;border:1px solid #4e5163"></div>
<div class="btn" style="left:420px;top:773px;width:43px;height:27px"></div>
<div class="t" style="left:429.3px;top:781.6px;font-size:13.8px;">Add</div>
<div class="btn" style="left:470px;top:773px;width:115px;height:27px"></div>
<div class="t" style="left:478.4px;top:781.6px;font-size:13.8px;">Import from File</div>
<div class="btn" style="left:591px;top:773px;width:88px;height:27px"></div>
<div class="t" style="left:619.5px;top:781.9px;font-size:13.2px;">Suggest</div>
<svg class="a" style="left:601px;top:777px" width="16" height="18" viewBox="0 0 16 18"><circle cx="8.2" cy="7.8" r="4.6" fill="#e9dc98" stroke="#b09838" stroke-width="1.3"/><path d="M6 11.5 L10.4 11.5 L10 15 L6.4 15 Z" fill="#d8c46a" stroke="#a08a30" stroke-width="0.8"/></svg>
<div class="a" style="left:532px;top:806px;width:19px;height:19px;border:1.5px solid #75788a;border-radius:3px;background:#292c37"></div>
<div class="t" style="left:558.0px;top:812.0px;font-size:13.3px;">Show keywords only</div>
<div class="a" style="left:0;top:31px;width:1px;height:832px;background:rgba(110,114,140,0.22)"></div>
</body></html>
